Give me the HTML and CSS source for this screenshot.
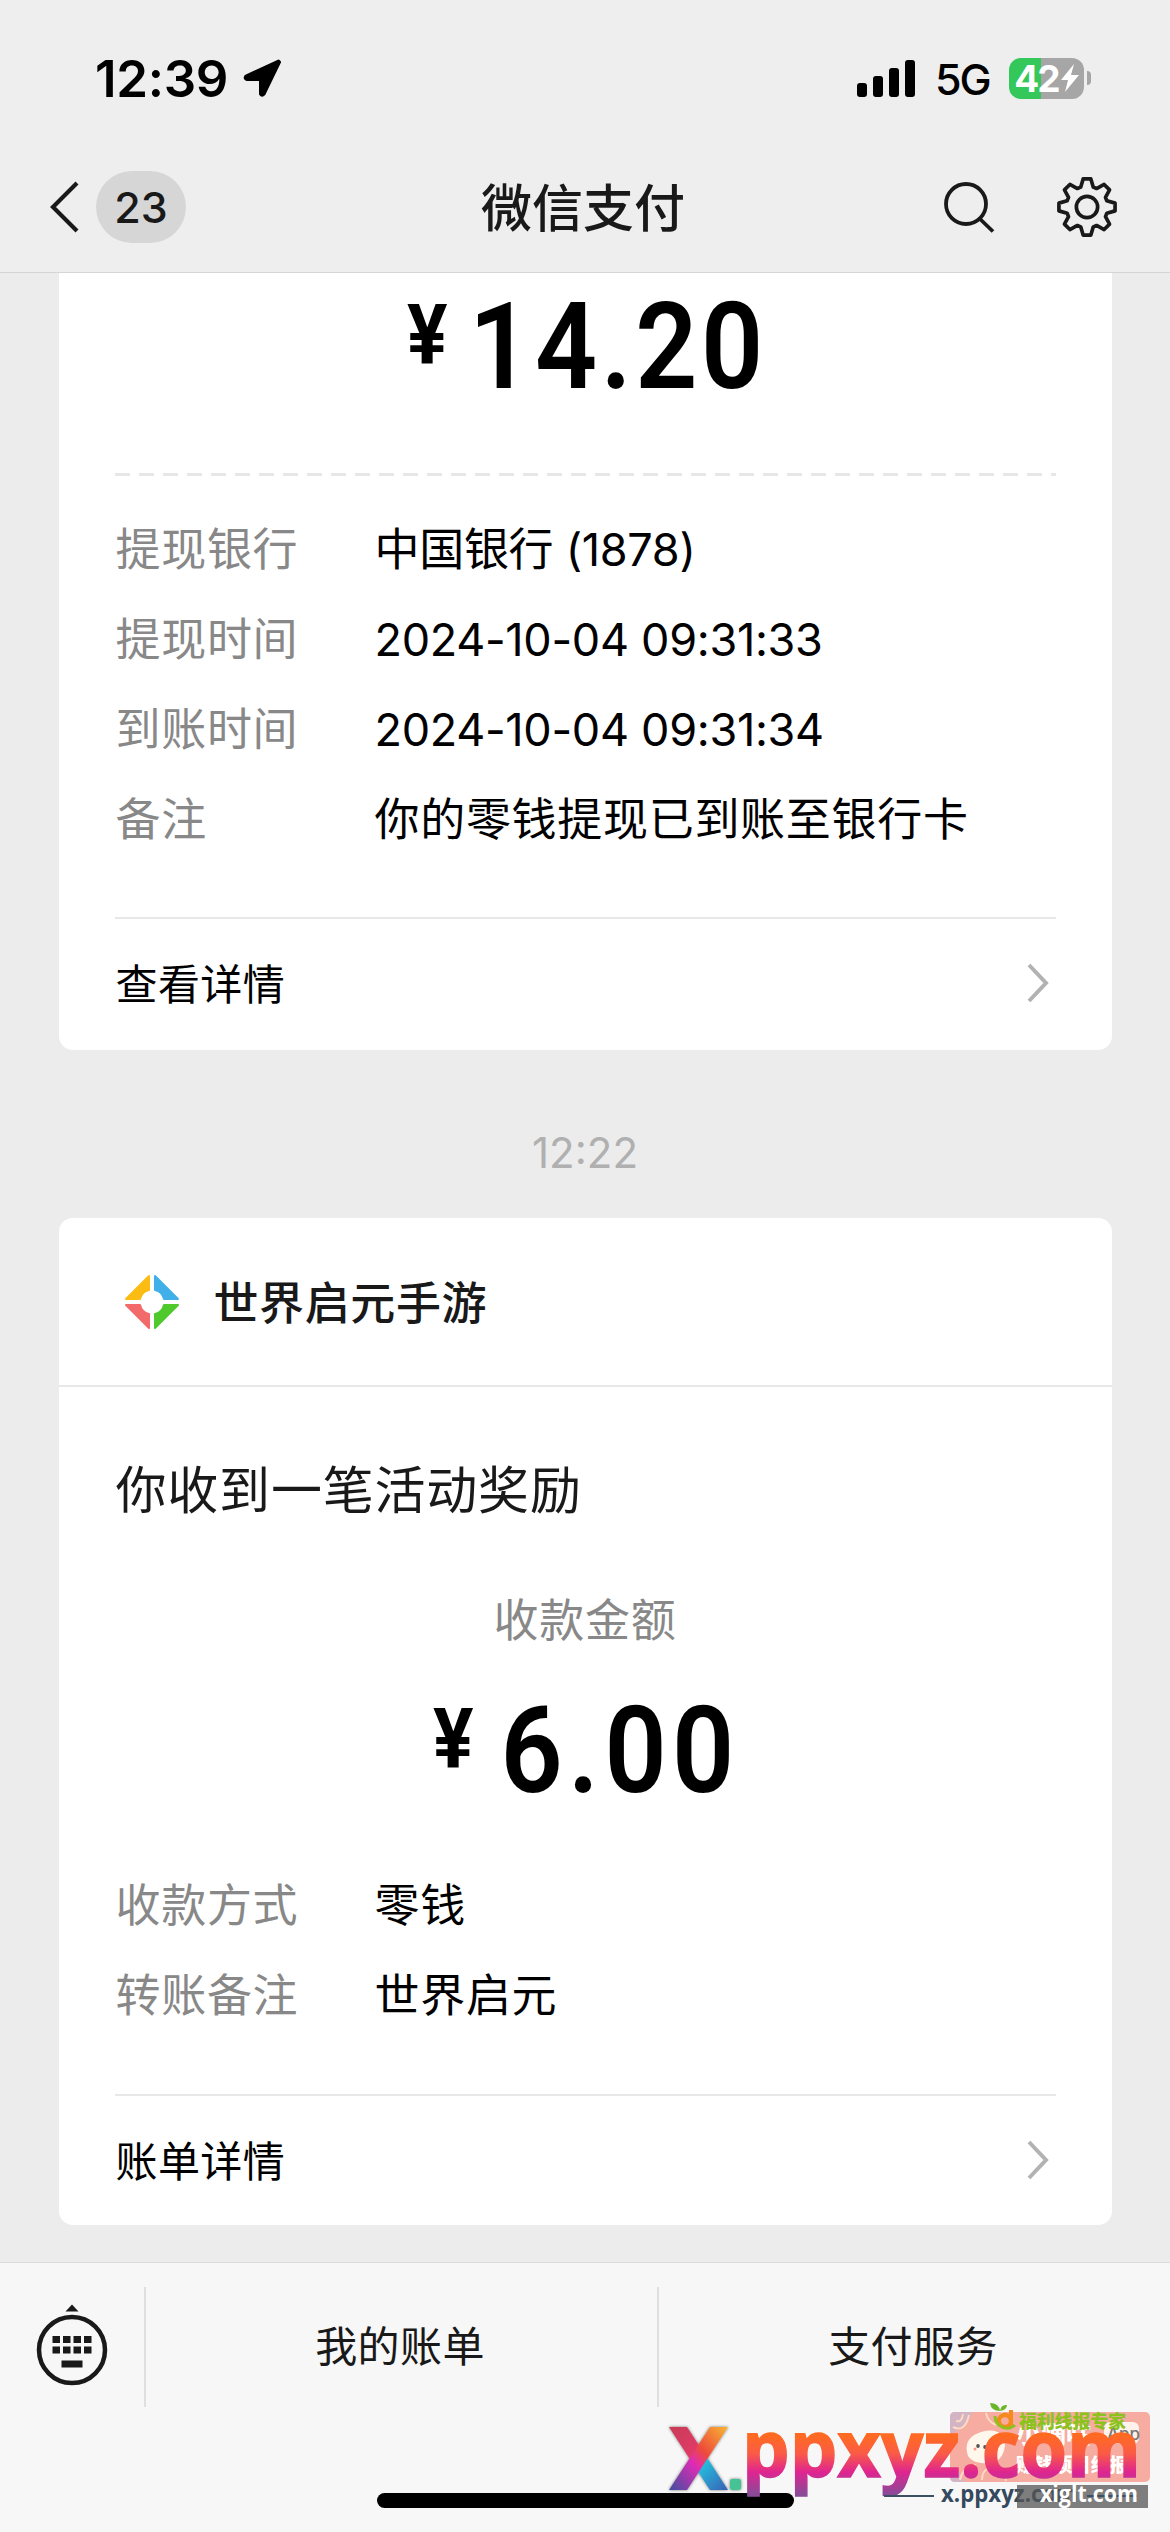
FILE: index.html
```html
<!DOCTYPE html>
<html lang="zh-CN">
<head>
<meta charset="utf-8">
<title>微信支付</title>
<link rel="stylesheet" href="styles.css">
</head>
<body>
<div class="screen">
  <header class="top">
    <div class="status">
      <span class="time">12:39</span>
      <svg class="loc" width="40" height="40" viewBox="0 0 40 40"><path d="M36.500 3 4 18Q2 20.500 5 21.500H18.500V36Q20 38.500 22 36L37.500 4Z" stroke="#000" stroke-width="3" stroke-linejoin="round"/></svg>
      <svg class="bars" width="58" height="37" viewBox="0 0 58 37"><rect y="23" width="10" height="14" rx="3"/><rect x="16" y="16" width="10" height="21" rx="3"/><rect x="32" y="8" width="10" height="29" rx="3"/><rect x="48" width="10" height="37" rx="3"/></svg>
      <span class="net">5G</span>
      <div class="battery"><span>42</span><svg width="18" height="28" viewBox="0 0 18 28"><path d="M13 0 0 16H7L4 28 18 11H10Z" fill="#fff"/></svg></div>
      <i class="tip"></i>
    </div>
    <nav class="nav">
      <div class="side">
        <svg width="30" height="54" viewBox="0 0 30 54"><path d="M28 3 4 27 28 51" fill="none" stroke="#191919" stroke-width="4.200"/></svg>
        <span class="count">23</span>
      </div>
      <h1 class="title">微信支付</h1>
      <div class="side tools">
        <svg width="52" height="52" viewBox="0 0 52 52" fill="none" stroke="#191919" stroke-width="3.800"><circle cx="23" cy="23" r="20"/><path d="M36 37 50 50.500"/></svg>
        <svg width="60" height="60" viewBox="-31 -31 62 62" fill="none" stroke="#191919" stroke-width="3.800" stroke-linejoin="round"><path d="M-4-29H4L6.500-20.500 9.900-19.100 17.700-23.300 23.300-17.700 19.100-9.900 20.500-6.500 29-4V4L20.500 6.500 19.100 9.900 23.300 17.700 17.700 23.300 9.900 19.100 6.500 20.500 4 29H-4L-6.500 20.500-9.900 19.100-17.700 23.300-23.300 17.700-19.100 9.900-20.500 6.500-29 4V-4L-20.500-6.500-19.100-9.900-23.300-17.700-17.700-23.300-9.900-19.100-6.500-20.500Z"/><circle r="11"/></svg>
      </div>
    </nav>
  </header>
  <main class="chat">
    <section class="card first">
      <svg class="amount" width="350" height="92" viewBox="0 0 350 92"><g transform="scale(.9 1)"><text class="yen" x="0" y="63">¥</text><text class="sum" x="69" y="87">14.20</text></g></svg>
      <div class="dash"></div>
      <dl class="rows">
        <dt>提现银行</dt><dd class="num">中国银行 (1878)</dd>
        <dt>提现时间</dt><dd class="num">2024-10-04 09:31:33</dd>
        <dt>到账时间</dt><dd class="num">2024-10-04 09:31:34</dd>
        <dt>备注</dt><dd>你的零钱提现已到账至银行卡</dd>
      </dl>
      <div class="more"><span>查看详情</span><svg width="24" height="42" viewBox="0 0 24 42"><path d="M3 3 20 21 3 39" fill="none" stroke="#b2b2b2" stroke-width="4"/></svg></div>
    </section>
    <time class="stamp">12:22</time>
    <section class="card second">
      <div class="merchant">
        <svg width="56" height="56" viewBox="-28 -28 56 56"><g stroke-width="2" stroke-linejoin="round"><path d="M-3-26V-12A12 12 0 0 0-12-3H-26Z" fill="#fbbc13" stroke="#fbbc13"/><path d="M3-26V-12A12 12 0 0 1 12-3H26Z" fill="#42b0e8" stroke="#42b0e8"/><path d="M-3 26V12A12 12 0 0 1-12 3H-26Z" fill="#f36a6a" stroke="#f36a6a"/><path d="M3 26V12A12 12 0 0 0 12 3H26Z" fill="#4fc92c" stroke="#4fc92c"/></g></svg>
        <span>世界启元手游</span>
      </div>
      <h2 class="headline">你收到一笔活动奖励</h2>
      <div class="caption">收款金额</div>
      <svg class="amount" width="298" height="92" viewBox="0 0 298 92"><g transform="scale(.9 1)"><text class="yen" x="0" y="63">¥</text><text class="sum wide" x="75" y="87">6.00</text></g></svg>
      <dl class="rows">
        <dt>收款方式</dt><dd>零钱</dd>
        <dt>转账备注</dt><dd>世界启元</dd>
      </dl>
      <div class="more"><span>账单详情</span><svg width="24" height="42" viewBox="0 0 24 42"><path d="M3 3 20 21 3 39" fill="none" stroke="#b2b2b2" stroke-width="4"/></svg></div>
    </section>
  </main>
  <footer class="menu">
    <div class="key"><svg width="72" height="84" viewBox="-36 -48 72 84"><circle r="33" fill="none" stroke="#191919" stroke-width="4.500"/><path d="M-6.500-38.500 0-45.500 6.500-38.500ZM-19.500-14h7.500v7h-7.500zm10.500 0h7.500v7h-7.500zm10.500 0h7.500v7h-7.500zm10.500 0h7.500v7h-7.500zM-19.500-3.500h7.500v7h-7.500zm10.500 0h7.500v7h-7.500zm10.500 0h7.500v7h-7.500zm10.500 0h7.500v7h-7.500zM-10.500 10.500h21v7h-21z" fill="#191919"/></svg></div>
    <div class="item">我的账单</div>
    <div class="item">支付服务</div>
  </footer>
  <div class="home"></div>
  <svg class="mark" width="510" height="132" viewBox="660 2400 510 132">
    <defs>
      <linearGradient id="warm" gradientUnits="userSpaceOnUse" x1="0" y1="2436" x2="0" y2="2494"><stop offset="0" stop-color="#ff6a22"/><stop offset=".3" stop-color="#fa5b45"/><stop offset=".62" stop-color="#df2590"/><stop offset="1" stop-color="#8a4a98"/></linearGradient>
      <linearGradient id="xa" x1="0" y1="0" x2="1" y2="1"><stop offset="0" stop-color="#c93a55"/><stop offset=".45" stop-color="#e23a6a"/><stop offset=".55" stop-color="#22c5e0"/><stop offset="1" stop-color="#3a5fb5"/></linearGradient>
      <linearGradient id="xb" x1="1" y1="0" x2="0" y2="1"><stop offset="0" stop-color="#f7b733"/><stop offset=".4" stop-color="#ee4a3a"/><stop offset=".58" stop-color="#e02bb5"/><stop offset="1" stop-color="#3d4fa0"/></linearGradient>
      <filter id="soft" x="-20%" y="-20%" width="140%" height="140%"><feDropShadow dx="0" dy="0" stdDeviation="1.500" flood-color="#333" flood-opacity=".7"/></filter>
    </defs>
    <rect x="950" y="2412" width="200" height="70" rx="5" fill="#f6aca0"/>
    <path d="M950 2434V2417q0-5 5-5h17q-4 16-22 22M950 2466q10 2 14 16h-9q-5 0-5-5Z" fill="#d3b4c4"/>
    <path d="M953 2427q12 6 16-12M956 2421q6 2 7-7M986 2413q2 9 10 12M1002 2412q0 9-4 13M960 2480q2-12 16-15M982 2480q0-8 5-11M1006 2481q-2-12-12-15" fill="none" stroke="#ffd9c0" stroke-width="2"/>
    <path d="M968 2456q-6-18 13-24q22-6 24 13q-2 21-24 18q-9-1-13-7Z" fill="#fff7ec"/>
    <ellipse cx="978" cy="2446" rx="1.800" ry="2" fill="#555"/><ellipse cx="985" cy="2447" rx="1.800" ry="2" fill="#555"/><circle cx="975" cy="2449" r="1.500" fill="#f49a90"/>
    <text x="1016" y="2443" class="badge" font-size="25">小嘀咕</text>
    <rect x="1104" y="2422" width="35" height="22" rx="6" fill="#fff2ea"/>
    <text x="1107" y="2440" class="app">App</text>
    <text x="1016" y="2472" class="badge" font-size="19" textLength="112">赚钱项目线报</text>
    <circle cx="1005" cy="2421" r="6" fill="none" stroke="#f58a1f" stroke-width="4.500"/><path d="M995 2416a12 12 0 0 0 20 9" fill="none" stroke="#8cc21e" stroke-width="3"/><path d="M1011 2410v15" stroke="#f58a1f" stroke-width="4"/>
    <path d="M990 2403q9 0 10 8q-9 0-10-8ZM1000 2411q1-7 7-6q0 5-7 6" fill="#6db52a"/>
    <text x="1019" y="2428" class="green" textLength="107">福利线报专家</text>
    <g filter="url(#soft)"><path d="M669 2427h18L728 2490H710Z" fill="url(#xa)"/><path d="M728 2427H710L669 2490H687Z" fill="url(#xb)"/><rect x="730" y="2479" width="11" height="11" rx="2" fill="#45c395"/></g>
    <text x="742" y="2477" class="domain" textLength="399" lengthAdjust="spacingAndGlyphs" fill="url(#warm)" stroke="url(#warm)" stroke-width="1.500">ppxyz.com</text>
    <path d="M884 2496h50" stroke="#3d5063" stroke-width="2"/>
    <text x="941" y="2502" class="small" textLength="137" lengthAdjust="spacingAndGlyphs" fill="#34495e">x.ppxyz.com</text>
    <rect x="1017" y="2485" width="131" height="23" fill="#555" opacity=".75"/>
    <path d="M1087 2496h50" stroke="#3d5063" stroke-width="2"/>
    <text x="1040" y="2502" class="small" textLength="98" lengthAdjust="spacingAndGlyphs" fill="#fff">xiglt.com</text>
  </svg>
</div>
</body>
</html>
```
FILE: styles.css
```css
*{box-sizing:border-box;margin:0;padding:0}
body{width:1170px;height:2532px;background:#ececec;font-family:Inter,"Noto Sans CJK SC",sans-serif;color:#000}
svg{display:block;flex:none}
.screen{position:relative;display:flex;flex-direction:column;height:2532px;overflow:hidden}

.top{height:273px;background:#eee;border-bottom:1px solid #d5d5d5}
.status{display:flex;align-items:center;height:142px;padding:14px 78px 0 95px}
.time{font-size:51px;font-weight:600;letter-spacing:-.3px;width:147px;white-space:nowrap}
.bars{margin-left:575px}
.net{font-size:43px;font-weight:500;width:54px;margin-left:20px;letter-spacing:-2px;margin-top:2px}
.battery{display:flex;align-items:center;justify-content:center;width:75px;height:41px;margin-left:20px;border-radius:12px;background:linear-gradient(90deg,#34c759 32px,#a6a6a6 32px);color:#fff;font-size:37px;font-weight:700;letter-spacing:-2px;gap:2px}
.tip{width:4px;height:14px;margin-left:3px;border-radius:0 4px 4px 0;background:#a6a6a6}

.nav{display:grid;grid-template-columns:1fr auto 1fr;align-items:center;height:130px;padding:0 53px 0 49px}
.side{display:flex;align-items:center}
.count{margin-left:17px;width:90px;height:72px;border-radius:36px;background:#d6d6d6;font-size:43px;line-height:72px;text-align:center;color:#191919;font-weight:500}
.title{font-size:51px;font-weight:500;line-height:72px;color:#191919;padding-top:3px}
.tools{justify-content:flex-end;gap:62px}

.chat{height:1989px;padding:0 58px;display:flex;flex-direction:column;align-items:center}
.card{width:1053px;background:#fff}
.first{height:777px;border-radius:0 0 14px 14px;padding:28px 56px 0}
.second{height:1007px;border-radius:14px}
.amount{margin:0 auto;overflow:visible}
.amount text{font-family:Roboto,sans-serif;font-weight:600}
.sum{font-size:121px;letter-spacing:4px}
.wide{letter-spacing:6px}
.amount .yen{font-size:84px;font-weight:700}
.amount{position:relative;left:-3px}
.dash{height:3px;margin:80px 0 29px;background:repeating-linear-gradient(90deg,#e7e7e7 0 15px,transparent 15px 24px)}
.rows{display:grid;grid-template-columns:259px 1fr;font-size:45px;line-height:90px;padding-left:1px;letter-spacing:.7px;white-space:nowrap}
.rows dt,.caption{color:#888}
.rows .num{letter-spacing:-.3px}
.more{display:flex;align-items:center;justify-content:space-between;height:131px;margin-top:52px;padding:0 6px 2px 1px;border-top:2px solid #e8e8e8;font-size:42px;letter-spacing:.4px}
.more span{padding-bottom:3px}
.stamp{height:168px;line-height:205px;font-size:42px;color:#b0b0b0}
.merchant{display:flex;align-items:center;height:169px;padding-left:65px;gap:34px;border-bottom:2px solid #e8e8e8;font-size:45px;font-weight:500;letter-spacing:.6px;color:#191919}
.merchant span{padding-bottom:3px}
.headline{padding:68px 57px 0;font-size:51px;font-weight:400;line-height:72px;letter-spacing:.8px;color:#191919}
.caption{margin:61px 0 51px;text-align:center;font-size:45px;line-height:66px;letter-spacing:.7px}
.second .rows{margin:64px 56px 0}
.second .more{margin:53px 56px 0}

.menu{display:flex;height:270px;padding-top:24px;background:#f7f7f7;border-top:1px solid #dcdcdc}
.key{width:144px;height:120px;padding:15px 0 0 36px}
.item{flex:1;height:120px;border-left:2px solid #dfdfdf;padding-right:3px;font-size:42px;line-height:119px;text-align:center;color:#191919;letter-spacing:.4px}
.home{position:absolute;left:377px;top:2493px;width:417px;height:15px;border-radius:8px;background:#000}
.mark{position:absolute;left:660px;top:2400px}
.domain{font:700 79px "Open Sans",sans-serif}
.small{font:700 24px "Open Sans",sans-serif}
.badge{font-family:"Noto Sans CJK SC",sans-serif;font-weight:900;fill:#fff}
.app{font:500 17px Inter,sans-serif;fill:#777}
.green{font:900 18px "Noto Sans CJK SC",sans-serif;fill:#8cc21e}
```
